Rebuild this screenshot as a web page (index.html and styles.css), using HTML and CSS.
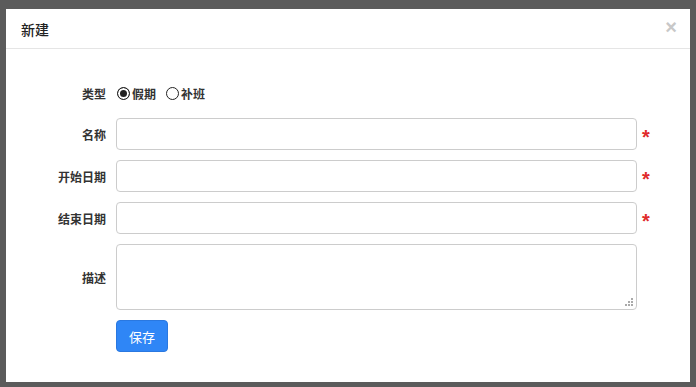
FILE: index.html
```html
<!DOCTYPE html>
<html>
<head>
    <title>新建</title>
    <link rel="stylesheet" href="styles.css">
</head>
<body>
    <div class="modal">
        <div class="modal-header">
            <h4 class="modal-title">新建</h4>
            <span class="close">&times;</span>
        </div>
        <form class="modal-body">
            <div class="row row-type">
                <label class="control-label">类型</label>
                <div class="radios">
                    <label class="radio"><input type="radio" name="type" checked>假期</label>
                    <label class="radio"><input type="radio" name="type">补班</label>
                </div>
            </div>
            <div class="row">
                <label class="control-label" for="name">名称</label>
                <input type="text" id="name" class="form-control">
                <span class="required">*</span>
            </div>
            <div class="row">
                <label class="control-label" for="start">开始日期</label>
                <input type="text" id="start" class="form-control">
                <span class="required">*</span>
            </div>
            <div class="row">
                <label class="control-label" for="end">结束日期</label>
                <input type="text" id="end" class="form-control">
                <span class="required">*</span>
            </div>
            <div class="row row-desc">
                <label class="control-label" for="desc">描述</label>
                <textarea id="desc" class="form-control"></textarea>
            </div>
            <div class="row">
                <span class="control-label"></span>
                <button type="button" class="btn">保存</button>
            </div>
        </form>
    </div>
</body>
</html>
```

FILE: styles.css
```css
body {
    margin: 0;
    background-color: #5b5b5b;
    font-family: "Noto Sans CJK SC", "Liberation Sans", sans-serif;
    color: #333;
    height: 387px;
    overflow: hidden;
}
.modal {
    margin: 9px 0 0 6px;
    width: 684px;
    height: 373px;
    background-color: #fff;
}
.modal-header {
    height: 39px;
    padding: 0 15px;
    border-bottom: 1px solid #e5e5e5;
    display: flex;
    align-items: center;
    justify-content: space-between;
}
.modal-title {
    margin: 0;
    font-size: 14px;
    font-weight: 500;
    color: #222;
}
.close {
    font-family: "Liberation Sans", sans-serif;
    font-size: 20px;
    font-weight: bold;
    color: #c8c8c8;
    margin-right: -2px;
    margin-top: -3px;
}
.modal-body {
    padding-top: 34px;
}
.row {
    display: flex;
    align-items: center;
    margin-bottom: 10px;
}
.row-type {
    height: 20px;
    margin-bottom: 15px;
}
.control-label {
    width: 100px;
    flex: none;
    padding-right: 10px;
    text-align: right;
    font-size: 12px;
    font-weight: bold;
}
.radios {
    display: flex;
    gap: 9px;
    font-size: 12px;
    font-weight: bold;
}
.radio {
    display: flex;
    align-items: center;
}
.radio input {
    appearance: none;
    margin: 0 2px 0 1px;
    width: 13px;
    height: 13px;
    box-sizing: border-box;
    border: 1px solid #222;
    border-radius: 50%;
    background-color: #fff;
}
.radio input:checked {
    background-color: #222;
    box-shadow: inset 0 0 0 2px #fff;
}
.form-control {
    width: 521px;
    height: 32px;
    box-sizing: border-box;
    border: 1px solid #ccc;
    border-radius: 4px;
    padding: 6px 12px;
    font-size: 13px;
    margin: 0;
}
textarea.form-control {
    height: 66px;
    resize: none;
    font-family: inherit;
    background-image: radial-gradient(circle, #aaa 1px, transparent 1.2px);
    background-size: 3px 3px;
    background-repeat: no-repeat;
}
.row-desc textarea.form-control {
    background-image:
        linear-gradient(#aaa, #aaa),
        linear-gradient(#aaa, #aaa),
        linear-gradient(#aaa, #aaa),
        linear-gradient(#aaa, #aaa),
        linear-gradient(#aaa, #aaa),
        linear-gradient(#aaa, #aaa);
    background-size: 2px 2px;
    background-position:
        right 3px bottom 3px,
        right 6px bottom 3px,
        right 9px bottom 3px,
        right 3px bottom 6px,
        right 6px bottom 6px,
        right 3px bottom 9px;
}
.required {
    margin-left: 5px;
    color: #e02b2b;
    font-family: "Liberation Sans", sans-serif;
    font-size: 20px;
    font-weight: bold;
    line-height: 1;
    padding-top: 6px;
}
.btn {
    height: 32px;
    padding: 0 12px;
    font-family: inherit;
    font-size: 13px;
    color: #fff;
    background-color: #2f86f6;
    border: 1px solid #2a78e0;
    border-radius: 4px;
}
```
